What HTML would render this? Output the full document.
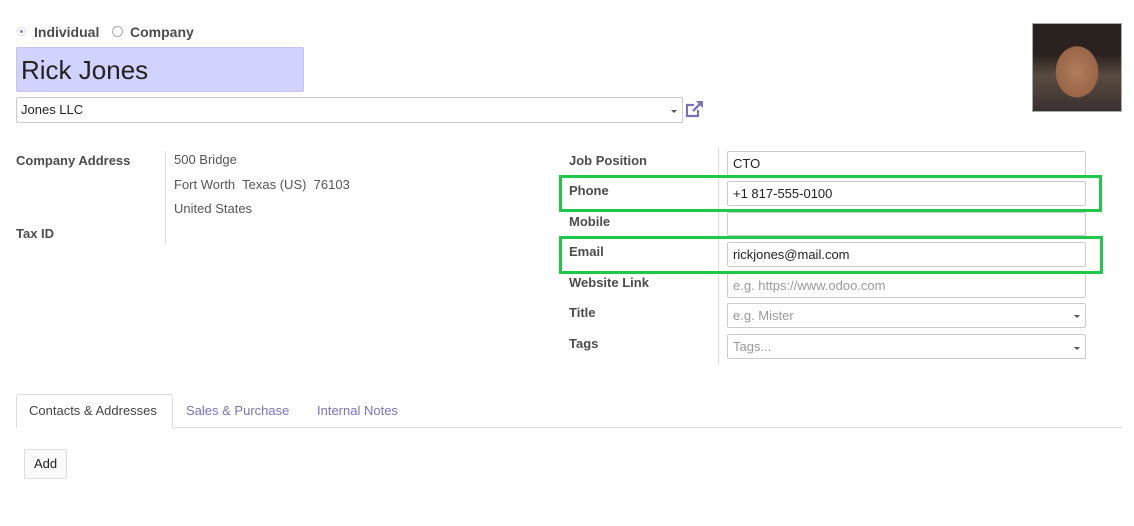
<!DOCTYPE html>
<html><head><meta charset="utf-8"><style>
*{box-sizing:border-box;margin:0;padding:0}
body{width:1134px;height:526px;background:#fff;font-family:"Liberation Sans",Arial,sans-serif;font-size:13px;color:#4c4c4c;position:relative;overflow:hidden}
.a{position:absolute;white-space:nowrap}
.b{font-weight:bold}
.inp{position:absolute;border:1px solid #ccc;border-radius:2px;height:25px;background:#fff;padding:4px 5px;font-size:13px;color:#222}
.ph{color:#999}
.caret{position:absolute;right:5px;top:11px;width:0;height:0;border-left:3px solid transparent;border-right:3px solid transparent;border-top:3px solid #555}
.green{position:absolute;border:3px solid #1fc84a}
</style></head><body>
<div class="a" style="left:17px;top:27px;width:9px;height:9px;border-radius:50%;border:1px solid #ddd;background:#fff"><div style="position:absolute;left:2px;top:2px;width:3px;height:3px;border-radius:50%;background:#8a82b8"></div></div>
<div class="a b" style="left:34px;top:24px;font-size:14px">Individual</div>
<div class="a" style="left:112px;top:26px;width:11px;height:11px;border-radius:50%;border:1px solid #aaa"></div>
<div class="a b" style="left:130px;top:24px;font-size:14px">Company</div>
<div class="a" style="left:16px;top:47px;width:288px;height:45px;background:#d2d2ff;border:1px solid #c4c4ee;border-radius:2px"></div>
<div class="a" style="left:21px;top:55px;font-size:26px;color:#222">Rick Jones</div>
<div class="inp" style="left:16px;top:97px;width:667px;height:26px;padding-left:4px">Jones LLC<div class="caret" style="top:12px"></div></div>
<svg class="a" style="left:685px;top:100px" width="20" height="19" viewBox="0 0 20 19"><path d="M13 10v6H2V5h7" fill="none" stroke="#7c72b8" stroke-width="2.2"/><path d="M11 1h7v7z" fill="#7c72b8"/><path d="M17 2L8 11" stroke="#7c72b8" stroke-width="2.4"/></svg>
<div class="a" style="left:1032px;top:23px;width:90px;height:89px;border:1px solid #aaa;background:radial-gradient(ellipse 30px 36px at 50% 55%,#b27d5c 0,#9a6548 70%,transparent 72%),linear-gradient(#2a221e 0,#2a221e 35%,#5a4b40 60%,#3a3030 100%)"></div>
<div class="a b" style="left:16px;top:153px">Company Address</div>
<div class="a b" style="left:16px;top:226px">Tax ID</div>
<div class="a" style="left:165px;top:151px;width:1px;height:93px;background:#ddd"></div>
<div class="a" style="left:174px;top:148px;line-height:24.5px;color:#555">500 Bridge<br>Fort Worth&nbsp; Texas (US)&nbsp; 76103<br>United States</div>
<div class="a b" style="left:569px;top:153px">Job Position</div>
<div class="a b" style="left:569px;top:183px">Phone</div>
<div class="a b" style="left:569px;top:214px">Mobile</div>
<div class="a b" style="left:569px;top:244px">Email</div>
<div class="a b" style="left:569px;top:275px">Website Link</div>
<div class="a b" style="left:569px;top:305px">Title</div>
<div class="a b" style="left:569px;top:336px">Tags</div>
<div class="a" style="left:718px;top:148px;width:1px;height:216px;background:#ddd"></div>
<div class="inp" style="left:727px;top:151px;width:359px">CTO</div>
<div class="inp" style="left:727px;top:181px;width:359px">+1 817-555-0100</div>
<div class="inp" style="left:727px;top:212px;width:359px;height:24px"></div>
<div class="inp" style="left:727px;top:242px;width:359px">rickjones@mail.com</div>
<div class="inp ph" style="left:727px;top:273px;width:359px">e.g. https://www.odoo.com</div>
<div class="inp ph" style="left:727px;top:303px;width:359px">e.g. Mister<div class="caret"></div></div>
<div class="inp ph" style="left:727px;top:334px;width:359px">Tags...<div class="caret" style="top:12px"></div></div>
<div class="green" style="left:559px;top:175px;width:543px;height:37px"></div>
<div class="green" style="left:559px;top:236px;width:544px;height:38px"></div>
<div class="a" style="left:16px;top:427px;width:1106px;height:1px;background:#ddd"></div>
<div class="a" style="left:16px;top:394px;width:157px;height:34px;border:1px solid #ddd;border-bottom:1px solid #fff;border-radius:3px 3px 0 0;background:#fff"></div>
<div class="a" style="left:29px;top:403px;color:#444">Contacts &amp; Addresses</div>
<div class="a" style="left:186px;top:403px;color:#7c72b8">Sales &amp; Purchase</div>
<div class="a" style="left:317px;top:403px;color:#7c72b8">Internal Notes</div>
<div class="a" style="left:24px;top:449px;width:43px;height:30px;border:1px solid #ddd;border-radius:2px;background:#fafafa"></div>
<div class="a" style="left:34px;top:456px;color:#222">Add</div>
</body></html>
